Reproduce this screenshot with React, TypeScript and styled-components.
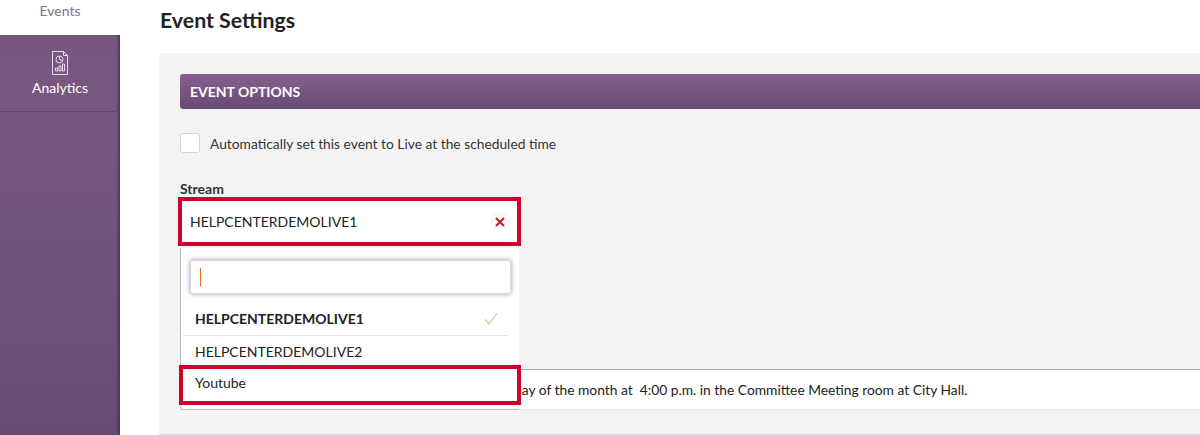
import styled, { createGlobalStyle } from 'styled-components';

const GlobalStyle = createGlobalStyle`
  html, body {
    margin: 0;
    height: 435px;
    overflow: hidden;
    background: #fff;
    font-family: Lato, "Liberation Sans", sans-serif;
    color: #222;
  }
`;

const Page = styled.div`
  display: flex;
  height: 435px;
  overflow: hidden;
`;

const Sidebar = styled.aside`
  width: 120px;
  flex: none;
  display: flex;
  flex-direction: column;
`;

const ActiveTab = styled.div`
  height: 35px;
  flex: none;
  padding-top: 2px;
  box-sizing: border-box;
  text-align: center;
  font-size: 14px;
  line-height: 17px;
  color: #7f7088;
`;

const Nav = styled.nav`
  flex: 1;
  background: linear-gradient(#78577f 0, #775782 30%, #684b72 100%);
  box-shadow: inset -3px 0 3px -1px #4d3559;
`;

const NavItem = styled.div`
  height: 77px;
  box-sizing: border-box;
  padding-top: 16px;
  display: flex;
  flex-direction: column;
  align-items: center;
  gap: 3px;
  border-bottom: 1px solid #654770;
  color: #fff;
  font-size: 14px;
  line-height: 20px;
`;

const Main = styled.main`
  flex: 1;
  min-width: 0;
  padding-left: 39px;
`;

const Title = styled.h1`
  margin: 0;
  height: 53px;
  padding: 7px 0 0 1px;
  box-sizing: border-box;
  font-size: 21.3px;
  line-height: 26px;
  font-weight: 700;
  color: #222;
`;

const Panel = styled.section`
  height: 382px;
  padding: 21px 0 0 21px;
  box-sizing: border-box;
  background: #f3f3f3;
  border-radius: 4px 0 0 0;
  border-bottom: 1px solid #ddd;
`;

const SectionBar = styled.div`
  height: 35px;
  padding-left: 10px;
  display: flex;
  align-items: center;
  box-sizing: border-box;
  border-radius: 3px 0 0 3px;
  background: linear-gradient(#86608e, #694b74);
  color: #fff;
  font-size: 14px;
  font-weight: 700;
`;

const CheckRow = styled.label`
  margin-top: 24px;
  height: 20px;
  display: flex;
  align-items: center;
  gap: 10px;
  font-size: 13.8px;
  line-height: 20px;
  color: #333;
`;

const CheckText = styled.span`
  margin-top: 2px;
`;

const Checkbox = styled.span`
  width: 20px;
  height: 20px;
  box-sizing: border-box;
  background: #fff;
  border: 1px solid #d6d6d6;
  border-radius: 3px;
`;

const Field = styled.div`
  position: relative;
  margin-top: 28px;
`;

const FieldLabel = styled.div`
  font-size: 14px;
  line-height: 16px;
  font-weight: 700;
  color: #333;
`;

const SelectedBox = styled.div`
  margin: 0 0 0 -2px;
  width: 343px;
  height: 49px;
  box-sizing: border-box;
  padding: 0 7px 0 8px;
  display: flex;
  align-items: center;
  justify-content: space-between;
  background: #fff;
  border: 4px solid #d0002a;
  font-size: 14px;
  color: #222;
`;

const ClearButton = styled.span`
  width: 20px;
  height: 20px;
  display: flex;
  align-items: center;
  justify-content: center;
  border-radius: 50%;
  background: #f9f8f8;
`;

const Dropdown = styled.div`
  position: absolute;
  z-index: 2;
  left: 0;
  top: 67px;
  width: 339px;
  height: 162px;
  box-sizing: border-box;
  padding: 12px 2px 0 2px;
  background: #fff;
  border-left: 1px solid #bbb;
  border-bottom: 1px solid #bbb;
  border-radius: 0 0 0 4px;
`;

const SearchInput = styled.div`
  margin: 0 6px 0 7px;
  height: 34px;
  box-sizing: border-box;
  padding: 7px 9px;
  background: #fff;
  border: 1px solid #ddd6e2;
  border-radius: 3px;
  box-shadow: 0 0 5px #a994b6;
`;

const Caret = styled.span`
  display: block;
  width: 1px;
  height: 18px;
  background: #e0701f;
`;

const Options = styled.ul`
  list-style: none;
  margin: 8px 0 0;
  padding: 0;
`;

const Option = styled.li<{ $selected?: boolean }>`
  height: ${(p) => (p.$selected ? 34 : 30)}px;
  margin-right: 9px;
  padding: 0 10px 0 12px;
  display: flex;
  align-items: center;
  justify-content: space-between;
  box-sizing: border-box;
  font-size: 14px;
  font-weight: ${(p) => (p.$selected ? 700 : 400)};
  color: #222;
  border-bottom: ${(p) => (p.$selected ? '1px solid #e3e3e3' : 'none')};
`;

const HighlightedOption = styled.div`
  position: absolute;
  z-index: 3;
  left: -1px;
  top: 184px;
  width: 342px;
  height: 40px;
  box-sizing: border-box;
  padding: 0 0 5px 12px;
  display: flex;
  align-items: center;
  border: 4px solid #d0002a;
  background: #fff;
  font-size: 14px;
  color: #222;
`;

const Description = styled.div`
  position: absolute;
  left: 0;
  right: 0;
  top: 188px;
  height: 41px;
  box-sizing: border-box;
  padding-left: 334px;
  display: flex;
  align-items: center;
  background: #fff;
  border-top: 1px solid #aaa;
  border-bottom: 1px solid #e6e6e6;
  font-size: 13.8px;
  color: #222;
  white-space: pre;
`;

const AnalyticsIcon = () => (
  <svg width="18" height="24" viewBox="0 0 18 24" fill="none" stroke="#e4dce8" strokeWidth="1">
    <path d="M1.5 .5h11l4 4v19h-15z" />
    <path d="M12.5 .5v4h4" />
    <circle cx="8.5" cy="8.5" r="3.5" />
    <path d="M8.5 5v3.5l2.5 1" />
    <path d="M4.5 20v-3h2v3zM8 20v-5h2v5zM11.5 20v-7h2v7z" />
  </svg>
);

const ClearIcon = () => (
  <svg width="10" height="10" viewBox="0 0 10 10" stroke="#c41f30" strokeWidth="2">
    <path d="M1 1l8 8M9 1l-8 8" />
  </svg>
);

const CheckIcon = () => (
  <svg width="14" height="12" viewBox="0 0 14 12" fill="none" stroke="#b5d88f" strokeWidth="1.2">
    <path d="M1 6.5l4 4.5 8-10.5" />
  </svg>
);

export default function App() {
  return (
    <Page>
      <GlobalStyle />
      <Sidebar>
        <ActiveTab>Events</ActiveTab>
        <Nav>
          <NavItem>
            <AnalyticsIcon />
            Analytics
          </NavItem>
        </Nav>
      </Sidebar>
      <Main>
        <Title>Event Settings</Title>
        <Panel>
          <SectionBar>EVENT OPTIONS</SectionBar>
          <CheckRow>
            <Checkbox />
            <CheckText>Automatically set this event to Live at the scheduled time</CheckText>
          </CheckRow>
          <Field>
            <FieldLabel>Stream</FieldLabel>
            <SelectedBox>
              HELPCENTERDEMOLIVE1
              <ClearButton>
                <ClearIcon />
              </ClearButton>
            </SelectedBox>
            <Dropdown>
              <SearchInput>
                <Caret />
              </SearchInput>
              <Options>
                <Option $selected>
                  HELPCENTERDEMOLIVE1
                  <CheckIcon />
                </Option>
                <Option>HELPCENTERDEMOLIVE2</Option>
              </Options>
            </Dropdown>
            <HighlightedOption>Youtube</HighlightedOption>
            <Description>day of the month at  4:00 p.m. in the Committee Meeting room at City Hall.</Description>
          </Field>
        </Panel>
      </Main>
    </Page>
  );
}
